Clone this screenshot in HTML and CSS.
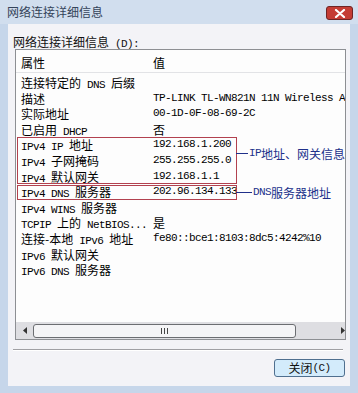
FILE: index.html
```html
<!DOCTYPE html>
<html>
<head>
<meta charset="utf-8">
<link rel="stylesheet" href="styles.css">
</head>
<body>
<div class="win">
  <div class="title">
    <span class="title-text">网络连接详细信息</span>
    <span class="close"><svg width="12" height="9" viewBox="0 0 12 9"><path d="M2 1 L10 8 M10 1 L2 8" stroke="#ffffff" stroke-width="2.2" stroke-linecap="round"/></svg></span>
  </div>
  <div class="client">
    <div class="label">网络连接详细信息<span class="m"> (D):</span></div>
    <div class="list">
      <div class="head"><span class="c1">属性</span><span class="c2">值</span></div>
      <div class="rows">
        <div class="row"><span class="c1">连接特定的<span class="m"> DNS </span>后缀</span><span class="c2"></span></div>
        <div class="row"><span class="c1">描述</span><span class="c2 m">TP-LINK TL-WN821N 11N Wireless Ac</span></div>
        <div class="row"><span class="c1">实际地址</span><span class="c2 m">00-1D-0F-08-69-2C</span></div>
        <div class="row"><span class="c1">已启用<span class="m"> DHCP</span></span><span class="c2">否</span></div>
        <div class="row"><span class="c1"><span class="m">IPv4 IP </span>地址</span><span class="c2 m">192.168.1.200</span></div>
        <div class="row"><span class="c1"><span class="m">IPv4 </span>子网掩码</span><span class="c2 m">255.255.255.0</span></div>
        <div class="row"><span class="c1"><span class="m">IPv4 </span>默认网关</span><span class="c2 m">192.168.1.1</span></div>
        <div class="row"><span class="c1"><span class="m">IPv4 DNS </span>服务器</span><span class="c2 m">202.96.134.133</span></div>
        <div class="row"><span class="c1"><span class="m">IPv4 WINS </span>服务器</span><span class="c2"></span></div>
        <div class="row"><span class="c1"><span class="m">TCPIP </span>上的<span class="m"> NetBIOS...</span></span><span class="c2">是</span></div>
        <div class="row"><span class="c1">连接-本地<span class="m"> IPv6 </span>地址</span><span class="c2 m">fe80::bce1:8103:8dc5:4242%10</span></div>
        <div class="row"><span class="c1"><span class="m">IPv6 </span>默认网关</span><span class="c2"></span></div>
        <div class="row"><span class="c1"><span class="m">IPv6 DNS </span>服务器</span><span class="c2"></span></div>
      </div>
      <div class="sbar">
        <div class="sb-btn"><svg width="4" height="7" viewBox="0 0 4 7"><path d="M4 0 L0 3.5 L4 7 Z" fill="#333"/></svg></div>
        <div class="sb-track"><div class="sb-thumb"><svg width="7" height="6" viewBox="0 0 7 6"><path d="M0.5 0 V6 M3.5 0 V6 M6.5 0 V6" stroke="#444" stroke-width="1"/></svg></div></div>
        <div class="sb-btn"><svg width="4" height="7" viewBox="0 0 4 7"><path d="M0 0 L4 3.5 L0 7 Z" fill="#333"/></svg></div>
      </div>
      <div class="box box1"></div>
      <div class="box box2"></div>
      <div class="note note1"><i class="ln ln1"></i><span class="m">IP</span>地址、网关信息</div>
      <div class="note note2"><i class="ln ln2"></i><span class="m">DNS</span>服务器地址</div>
    </div>
    <div class="sep"></div>
    <div class="foot"><span class="btn">关闭<span class="m">(C)</span></span></div>
  </div>
</div>
</body>
</html>
```

FILE: styles.css
```css
* { box-sizing: border-box; }
html, body { margin: 0; padding: 0; }
body {
  width: 358px;
  height: 393px;
  overflow: hidden;
  font-family: "Noto Sans CJK SC", "Liberation Sans", sans-serif;
  font-size: 12px;
  color: #000;
}
.win {
  width: 358px;
  height: 393px;
  background-color: #c6d6ea;
  display: flex;
  flex-direction: column;
}
.title {
  height: 24px;
  flex: none;
  display: flex;
  align-items: center;
  justify-content: space-between;
  padding: 0 5px 0 7px;
  background-color: #d1deee;
}
.title-text {
  color: #34445a;
  font-size: 12px;
  line-height: 14px;
}
.close {
  width: 27px;
  height: 14px;
  border: 1px solid #6e2424;
  border-radius: 3px;
  background-color: #c43c34;
  display: flex;
  align-items: center;
  justify-content: center;
  margin-top: 2px;
}
.client {
  margin: 0 8px;
  height: 362px;
  flex: none;
  background-color: #f3f3f7;
  padding-top: 10px;
}
.m {
  font-family: "Liberation Mono", monospace;
  font-size: 11px;
  letter-spacing: -0.6px;
  white-space: pre;
}
.label {
  height: 15px;
  line-height: 15px;
  padding-left: 5px;
  color: #111;
}
.list {
  position: relative;
  margin-left: 7px;
  width: 331px;
  height: 291px;
  border: 1px solid #8d8f93;
  background-color: #fdfdfd;
  display: grid;
  grid-template-rows: 23px 1fr 17px;
  overflow: hidden;
}
.head {
  padding-top: 2px;
  border-bottom: 1px solid #e2e3e6;
  display: flex;
  align-items: center;
  padding-left: 5px;
}
.rows {
  padding-top: 2px;
  padding-left: 5px;
  min-height: 0;
}
.row {
  height: 15.6px;
  line-height: 15.6px;
  display: flex;
  white-space: nowrap;
}
.c1 {
  width: 132px;
  flex: none;
  white-space: nowrap;
}
.c2 {
  flex: none;
  white-space: nowrap;
}
.sbar {
  display: grid;
  grid-template-columns: 17px 1fr 17px;
  background-color: #dedee2;
}
.sb-btn {
  display: flex;
  align-items: center;
  justify-content: center;
}
.sb-track {
  display: flex;
  align-items: center;
}
.sb-thumb {
  width: 263px;
  height: 14px;
  border: 1px solid #6b6d71;
  border-radius: 3px;
  background-color: #f4f4f6;
  display: flex;
  align-items: center;
  justify-content: center;
}
.box {
  position: absolute;
  left: 1px;
  width: 220px;
  border: 1px solid #b2414f;
}
.box1 { top: 87px; height: 47px; }
.box2 { top: 135px; height: 15px; }
.note {
  position: absolute;
  height: 16px;
  display: flex;
  align-items: center;
  color: #20308a;
  white-space: nowrap;
}
.note1 { left: 220px; top: 95px; }
.note2 { left: 220px; top: 134px; }
.ln {
  display: block;
  height: 1px;
  background-color: #20308a;
  margin-right: 1px;
}
.ln1 { width: 12px; }
.ln2 { width: 16px; }
.sep {
  margin: 9px 0 0 5px;
  width: 330px;
  height: 2px;
  border-top: 1px solid #a0a0a4;
  border-bottom: 1px solid #ffffff;
}
.foot {
  display: flex;
  justify-content: flex-end;
  padding-right: 5px;
  margin-top: 8px;
}
.btn {
  width: 71px;
  height: 18px;
  border: 1px solid #4f6f8f;
  border-radius: 3px;
  background-color: #d3ebfb;
  display: flex;
  align-items: center;
  justify-content: center;
  color: #111;
  line-height: 14px;
}
```
